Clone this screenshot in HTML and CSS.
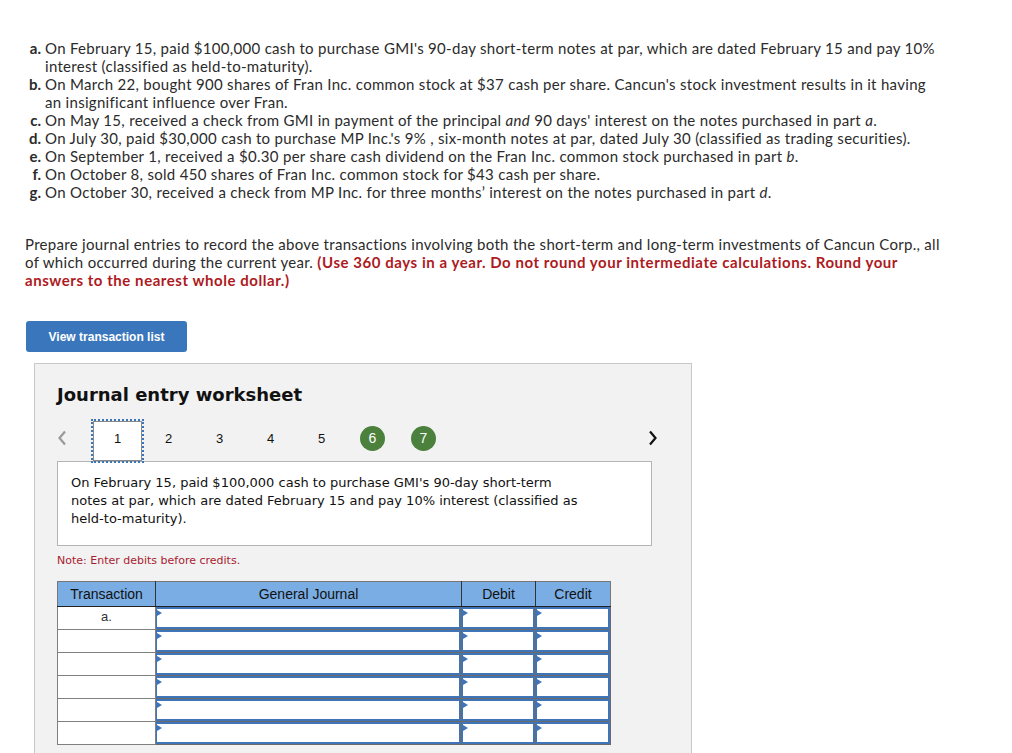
FILE: index.html
```html
<!DOCTYPE html>
<html lang="en">
<head>
<meta charset="utf-8">
<title>Journal entry worksheet</title>
<link rel="stylesheet" href="styles.css">
</head>
<body>
<div class="page">
  <ol class="parts">
    <li><span class="lbl">a.</span><span class="txt">On February 15, paid $100,000 cash to purchase GMI's 90-day short-term notes at par, which are dated February 15 and pay 10% interest (classified as held-to-maturity).</span></li>
    <li><span class="lbl">b.</span><span class="txt">On March 22, bought 900 shares of Fran Inc. common stock at $37 cash per share. Cancun's stock investment results in it having an insignificant influence over Fran.</span></li>
    <li><span class="lbl">c.</span><span class="txt">On May 15, received a check from GMI in payment of the principal <em>and</em> 90 days' interest on the notes purchased in part <em>a</em>.</span></li>
    <li><span class="lbl">d.</span><span class="txt">On July 30, paid $30,000 cash to purchase MP Inc.'s 9% , six-month notes at par, dated July 30 (classified as trading securities).</span></li>
    <li><span class="lbl">e.</span><span class="txt">On September 1, received a $0.30 per share cash dividend on the Fran Inc. common stock purchased in part <em>b</em>.</span></li>
    <li><span class="lbl">f.</span><span class="txt">On October 8, sold 450 shares of Fran Inc. common stock for $43 cash per share.</span></li>
    <li><span class="lbl">g.</span><span class="txt">On October 30, received a check from MP Inc. for three months’ interest on the notes purchased in part <em>d</em>.</span></li>
  </ol>

  <p class="instructions">Prepare journal entries to record the above transactions involving both the short-term and long-term investments of Cancun Corp., all of which occurred during the current year. <strong class="warn">(Use 360 days in a year. Do not round your intermediate calculations. Round your answers to the nearest whole dollar.)</strong></p>

  <button class="btn" type="button">View transaction list</button>

  <section class="worksheet">
    <h2 class="ws-title">Journal entry worksheet</h2>

    <div class="pager">
      <span class="arrow prev"><svg width="10" height="16" viewBox="0 0 10 16"><path d="M8 1.5 L2.5 8 L8 14.5" fill="none" stroke="#9a9a9a" stroke-width="2.2"/></svg></span>
      <span class="pg current">1</span>
      <span class="pg">2</span>
      <span class="pg">3</span>
      <span class="pg">4</span>
      <span class="pg">5</span>
      <span class="pg"><span class="done">6</span></span>
      <span class="pg"><span class="done">7</span></span>
      <span class="arrow next"><svg width="10" height="16" viewBox="0 0 10 16"><path d="M2 1.5 L7.5 8 L2 14.5" fill="none" stroke="#111" stroke-width="2.2"/></svg></span>
    </div>

    <div class="desc">On February 15, paid $100,000 cash to purchase GMI's 90-day short-term<br>notes at par, which are dated February 15 and pay 10% interest (classified as<br>held-to-maturity).</div>

    <p class="note">Note: Enter debits before credits.</p>

    <table class="journal">
      <thead>
        <tr><th class="c-tr">Transaction</th><th class="c-gj">General Journal</th><th class="c-db">Debit</th><th class="c-cr">Credit</th></tr>
      </thead>
      <tbody>
        <tr><td class="tr">a.</td><td class="in"><div class="field"></div></td><td class="in"><div class="field"></div></td><td class="in"><div class="field"></div></td></tr>
        <tr><td class="tr"></td><td class="in"><div class="field"></div></td><td class="in"><div class="field"></div></td><td class="in"><div class="field"></div></td></tr>
        <tr><td class="tr"></td><td class="in"><div class="field"></div></td><td class="in"><div class="field"></div></td><td class="in"><div class="field"></div></td></tr>
        <tr><td class="tr"></td><td class="in"><div class="field"></div></td><td class="in"><div class="field"></div></td><td class="in"><div class="field"></div></td></tr>
        <tr><td class="tr"></td><td class="in"><div class="field"></div></td><td class="in"><div class="field"></div></td><td class="in"><div class="field"></div></td></tr>
        <tr><td class="tr"></td><td class="in"><div class="field"></div></td><td class="in"><div class="field"></div></td><td class="in"><div class="field"></div></td></tr>
      </tbody>
    </table>
  </section>
</div>
</body>
</html>
```

FILE: styles.css
```css
* { box-sizing: border-box; }

html, body {
  margin: 0;
  padding: 0;
  background: #fff;
}

body {
  font-family: "Lato", "Open Sans", sans-serif;
  color: #2b2b2b;
  overflow: hidden;
}

.page {
  padding: 39px 0 0 25px;
  width: 942px;
}

.parts {
  list-style: none;
  margin: 0;
  padding: 0;
  font-size: 15px;
  line-height: 18px;
  letter-spacing: 0.3px;
}

.parts li {
  display: grid;
  grid-template-columns: 16px 1fr;
  column-gap: 4px;
}

.lbl {
  font-weight: 700;
  text-align: right;
  letter-spacing: 0;
}

.parts em { font-style: italic; }

.instructions {
  margin: 34px 0 0 0;
  font-size: 15px;
  line-height: 18px;
  letter-spacing: 0.3px;
}

.warn {
  color: #ad1a22;
  font-weight: 700;
  letter-spacing: 0.55px;
}

.btn {
  display: block;
  margin: 32px 0 0 1px;
  width: 161px;
  height: 31px;
  border: 0;
  border-radius: 3px;
  background: #3a76bc;
  color: #fff;
  font-family: "Liberation Sans", Arial, sans-serif;
  font-weight: 700;
  font-size: 12px;
  padding: 0;
}

.worksheet {
  margin: 11px 0 0 9px;
  width: 658px;
  background: #f2f2f2;
  border: 1px solid #c8c8c8;
  padding: 19px 38px 40px 22px;
  font-family: "DejaVu Sans", Verdana, sans-serif;
}

.ws-title {
  margin: 0;
  font-size: 18px;
  line-height: 24px;
  font-weight: 700;
  color: #111;
}

.pager {
  display: flex;
  align-items: center;
  height: 40px;
  margin-top: 14px;
  font-family: "Liberation Sans", Arial, sans-serif;
  font-size: 13px;
  color: #111;
}

.arrow {
  display: flex;
  align-items: center;
  justify-content: center;
  padding-bottom: 6px;
  height: 40px;
}

.arrow.prev {
  width: 14px;
  margin-right: 22px;
  justify-content: flex-start;
}

.arrow.next {
  margin-left: auto;
  margin-right: -5px;
  width: 10px;
}

.pg {
  width: 51px;
  height: 40px;
  display: flex;
  align-items: center;
  justify-content: center;
  padding-bottom: 6px;
}

.pg.current {
  width: 49px;
  background: #fff;
  border: 1px solid #8a8a8a;
  outline: 2px dotted #3a76bc;
  margin-right: 1px;
  position: relative;
  z-index: 1;
}

.done {
  width: 25px;
  height: 25px;
  border-radius: 50%;
  background: #4b813d;
  color: #fff;
  display: flex;
  align-items: center;
  justify-content: center;
  font-size: 14px;
}

.desc {
  background: #fff;
  border: 1px solid #b4b4b4;
  width: 595px;
  padding: 12px 14px 17px 13px;
  font-size: 13px;
  line-height: 18px;
  color: #111;
}

.note {
  margin: 8px 0 0 0;
  font-size: 11px;
  line-height: 14px;
  color: #a81c30;
}

.journal {
  margin-top: 13px;
  border-collapse: collapse;
  table-layout: fixed;
  width: 553px;
  border: 1px solid #777;
}

.journal th {
  background: #79ade3;
  font-family: "Liberation Sans", Arial, sans-serif;
  font-weight: 400;
  font-size: 14px;
  color: #111;
  height: 25px;
  padding: 0;
  border-left: 1px solid #333;
  border-bottom: 1px solid #222;
}

.journal th:first-child { border-left: 0; }

.c-tr { width: 98px; }
.c-gj { width: 306px; }
.c-db { width: 74px; }
.c-cr { width: 75px; }

.journal td {
  height: 23px;
  padding: 0;
  border: 1px solid #808080;
  background: #fff;
}

.journal td.tr {
  text-align: center;
  vertical-align: top;
  font-family: "Liberation Sans", Arial, sans-serif;
  font-size: 13px;
  color: #333;
  padding-top: 2px;
}

.journal td.in {
  border-color: #6b6b6b;
}

.field {
  height: 22px;
  border: 2px solid #3f74b8;
  border-left-width: 1px;
  background: #fff;
  position: relative;
}

.field::before {
  content: "";
  position: absolute;
  left: 0;
  top: 1px;
  border-left: 5px solid #3f74b8;
  border-top: 3px solid transparent;
  border-bottom: 3px solid transparent;
}
```
